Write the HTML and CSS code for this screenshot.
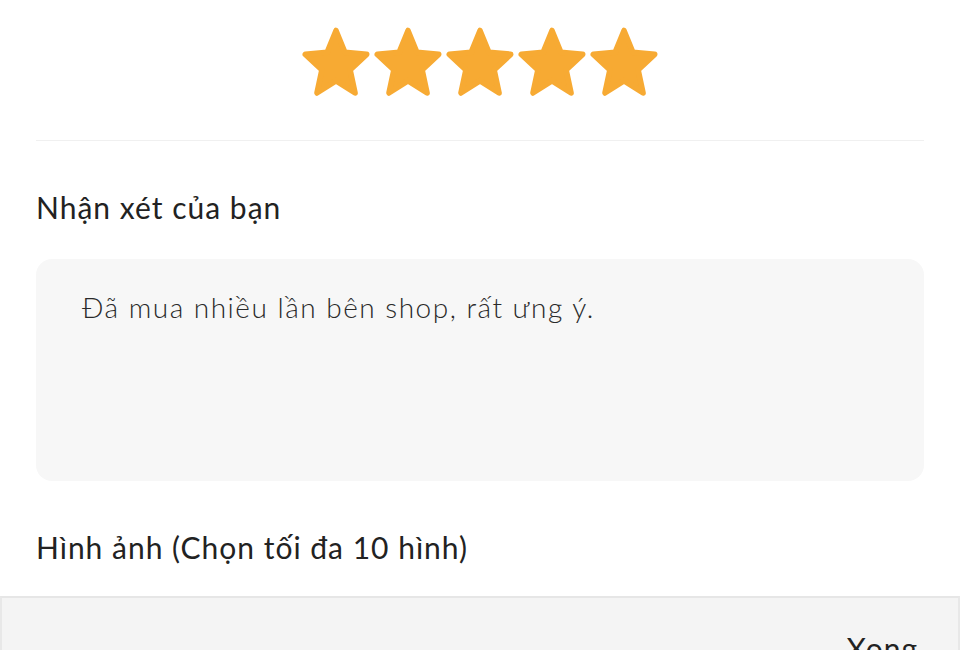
FILE: index.html
```html
<!DOCTYPE html>
<html lang="vi">
<head>
  <meta charset="UTF-8" />
  <meta name="viewport" content="width=device-width, initial-scale=1.0"/>
  <title>Đánh giá sản phẩm</title>
  <link rel="stylesheet" href="styles.css">
</head>
<body>
  <div class="page">
    <div class="rating">
      <svg class="star" viewBox="0.28 0.78 23.43 22.5" preserveAspectRatio="none"><path d="M12 2.2l2.9 6.6 7.1.6-5.4 4.7 1.6 7-6.2-3.7-6.2 3.7 1.6-7L2 9.4l7.1-.6z"/></svg>
      <svg class="star" viewBox="0.28 0.78 23.43 22.5" preserveAspectRatio="none"><path d="M12 2.2l2.9 6.6 7.1.6-5.4 4.7 1.6 7-6.2-3.7-6.2 3.7 1.6-7L2 9.4l7.1-.6z"/></svg>
      <svg class="star" viewBox="0.28 0.78 23.43 22.5" preserveAspectRatio="none"><path d="M12 2.2l2.9 6.6 7.1.6-5.4 4.7 1.6 7-6.2-3.7-6.2 3.7 1.6-7L2 9.4l7.1-.6z"/></svg>
      <svg class="star" viewBox="0.28 0.78 23.43 22.5" preserveAspectRatio="none"><path d="M12 2.2l2.9 6.6 7.1.6-5.4 4.7 1.6 7-6.2-3.7-6.2 3.7 1.6-7L2 9.4l7.1-.6z"/></svg>
      <svg class="star" viewBox="0.28 0.78 23.43 22.5" preserveAspectRatio="none"><path d="M12 2.2l2.9 6.6 7.1.6-5.4 4.7 1.6 7-6.2-3.7-6.2 3.7 1.6-7L2 9.4l7.1-.6z"/></svg>
    </div>

    <div class="divider"></div>

    <h2 class="section-title">Nhận xét của bạn</h2>
    <div class="comment-box">Đã mua nhiều lần bên shop, rất ưng ý.</div>

    <h2 class="section-title photos-title">Hình ảnh (Chọn tối đa 10 hình)</h2>
  </div>

  <div class="bottom-bar">
    <span class="done-btn">Xong</span>
  </div>
</body>
</html>
```

FILE: styles.css
```css
body {
  margin: 0;
  padding: 0;
  background: #ffffff;
  font-family: 'Lato', 'Noto Sans', sans-serif;
  color: #222;
  overflow: hidden;
  height: 650px;
}

.page {
  padding: 0 36px;
}

.rating {
  display: flex;
  justify-content: center;
  gap: 0;
  padding-top: 26px;
  height: 74px;
}

.star {
  width: 72px;
  height: 74px;
}

.star path {
  fill: #f7aa33;
  stroke: #f7aa33;
  stroke-width: 1.8;
  stroke-linejoin: round;
}

.divider {
  height: 1px;
  background: #f0f0f0;
  margin-top: 40px;
}

.section-title {
  font-size: 30px;
  font-weight: 400;
  letter-spacing: 1px;
  color: #222;
  margin: 48px 0 0;
  line-height: 36px;
}

.comment-box {
  margin-top: 34px;
  height: 222px;
  box-sizing: border-box;
  background: #f7f7f7;
  border-radius: 16px;
  padding: 30px 46px;
  font-size: 28px;
  font-weight: 300;
  letter-spacing: 1.5px;
  color: #2a2a2a;
  line-height: 36px;
}

.photos-title {
  margin-top: 48px;
}

.bottom-bar {
  position: absolute;
  left: 0;
  right: 0;
  top: 596px;
  height: 80px;
  background: #f4f4f4;
  border-top: 2px solid #e6e6e6;
  border-left: 2px solid #e8e8e8;
  border-right: 2px solid #e8e8e8;
  display: flex;
  justify-content: flex-end;
  padding-right: 40px;
}

.done-btn {
  font-size: 30px;
  letter-spacing: 1px;
  color: #222;
  margin-top: 32px;
}
```
